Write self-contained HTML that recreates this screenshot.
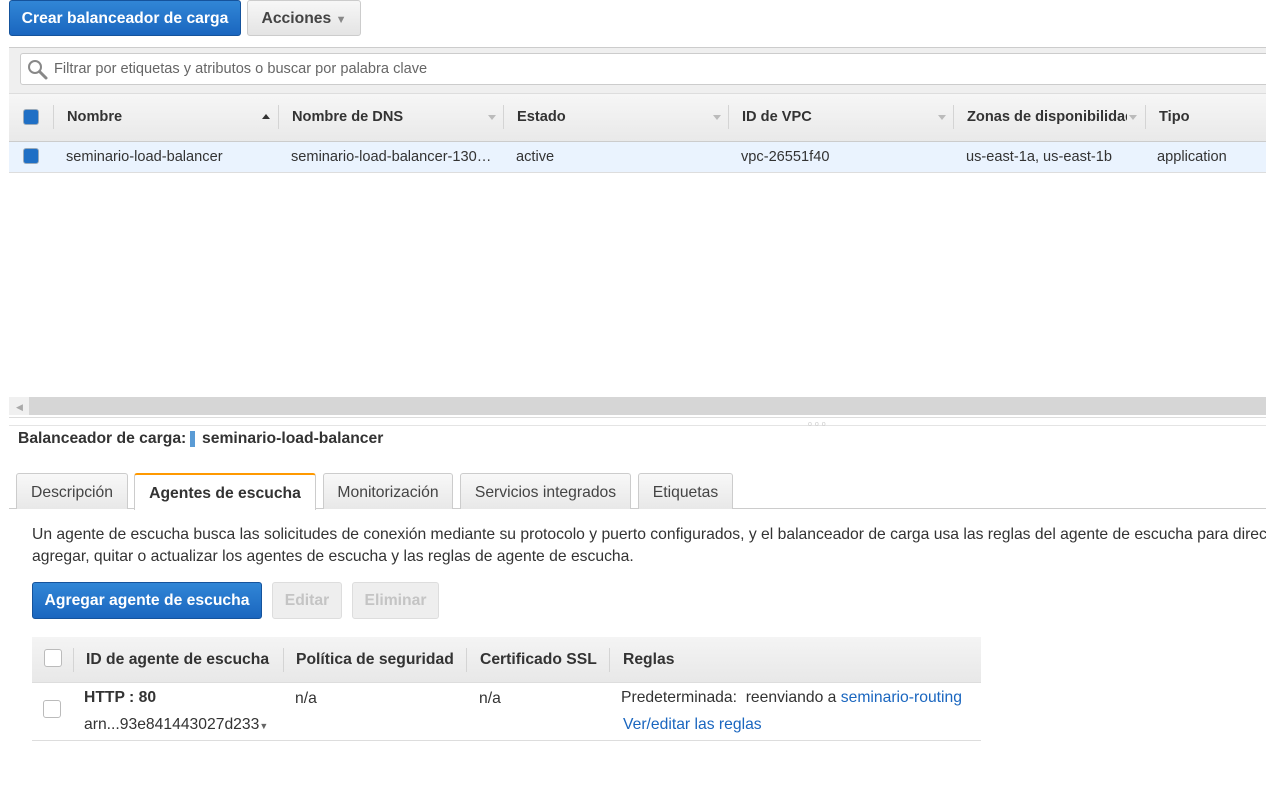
<!DOCTYPE html>
<html><head><meta charset="utf-8"><style>
*{box-sizing:border-box;margin:0;padding:0}
body{width:1266px;height:796px;overflow:hidden;background:#fff;font-family:"Liberation Sans",Arial,sans-serif;font-size:15.7px;color:#333;position:relative}
.a{position:absolute;white-space:nowrap}
.s{font-size:14.6px}
.btnp{background:linear-gradient(#3186d6,#1a66bf);border:1px solid #15539c;border-radius:3px;color:#fff;font-weight:bold;text-align:center}
.btng{background:linear-gradient(#f7f7f7,#e4e4e4);border:1px solid #ccc;border-radius:3px;color:#444;font-weight:bold;text-align:center}
.btnd{background:#eee;border:1px solid #ddd;border-radius:3px;color:#c4c4c4;font-weight:bold;text-align:center}
.cb{position:absolute;width:16px;height:16px;border-radius:3px;background:#1f6fc5;border:1px solid #9ab}
.cbw{position:absolute;width:18px;height:18px;border-radius:3px;background:#fff;border:1px solid #bbb}
.hd{font-weight:bold;color:#333}
.sep{position:absolute;width:1px;background:#d4d4d4}
.tri{position:absolute;width:0;height:0;border-left:4px solid transparent;border-right:4px solid transparent}
.tab{position:absolute;top:473px;height:36px;border:1px solid #ccc;border-bottom:none;border-radius:3px 3px 0 0;background:linear-gradient(#f8f8f8,#e8e8e8);text-align:center;line-height:38px;color:#444}
a{color:#1a66bf;text-decoration:none}
</style></head><body>
<div class="a btnp" style="left:9px;top:0;width:232px;height:36px;line-height:35px">Crear balanceador de carga</div>
<div class="a btng" style="left:247px;top:0;width:114px;height:36px;line-height:35px">Acciones <span style="color:#888;font-size:11px">&#9660;</span></div>

<div class="a" style="left:9px;top:47px;width:1257px;height:46px;background:#efefef;border-top:1px solid #ccc"></div>
<div class="a" style="left:20px;top:53px;width:1250px;height:32px;background:#fff;border:1px solid #ccc;border-radius:3px"></div>
<svg class="a" style="left:27px;top:59px" width="22" height="22" viewBox="0 0 22 22"><circle cx="8" cy="8" r="6" fill="none" stroke="#888" stroke-width="2"/><line x1="12.5" y1="12.5" x2="19" y2="19" stroke="#888" stroke-width="3" stroke-linecap="round"/></svg>
<div class="a s" style="left:54px;top:61px;color:#666">Filtrar por etiquetas y atributos o buscar por palabra clave</div>

<div class="a" style="left:9px;top:93px;width:1257px;height:49px;background:linear-gradient(#f6f6f6,#e9e9e9);border-top:1px solid #ddd;border-bottom:1px solid #ccc"></div>
<div class="cb" style="left:23px;top:109px"></div>
<div class="sep" style="left:53px;top:105px;height:24px"></div>
<div class="a hd s" style="left:67px;top:109px">Nombre</div>
<div class="tri" style="left:262px;top:114px;border-bottom:5px solid #333"></div>
<div class="sep" style="left:278px;top:105px;height:24px"></div>
<div class="a hd s" style="left:292px;top:109px">Nombre de DNS</div>
<div class="tri" style="left:488px;top:115px;border-top:5px solid #bbb"></div>
<div class="sep" style="left:503px;top:105px;height:24px"></div>
<div class="a hd s" style="left:517px;top:109px">Estado</div>
<div class="tri" style="left:713px;top:115px;border-top:5px solid #bbb"></div>
<div class="sep" style="left:728px;top:105px;height:24px"></div>
<div class="a hd s" style="left:742px;top:109px">ID de VPC</div>
<div class="tri" style="left:938px;top:115px;border-top:5px solid #bbb"></div>
<div class="sep" style="left:953px;top:105px;height:24px"></div>
<div class="a hd s" style="left:967px;top:109px;width:160px;overflow:hidden">Zonas de disponibilidad</div>
<div class="tri" style="left:1129px;top:115px;border-top:5px solid #bbb"></div>
<div class="sep" style="left:1145px;top:105px;height:24px"></div>
<div class="a hd s" style="left:1159px;top:109px">Tipo</div>

<div class="a" style="left:9px;top:142px;width:1257px;height:31px;background:#eaf3fe;border-bottom:1px solid #ddd"></div>
<div class="cb" style="left:23px;top:148px"></div>
<div class="a s" style="left:66px;top:149px">seminario-load-balancer</div>
<div class="a s" style="left:291px;top:149px">seminario-load-balancer-130…</div>
<div class="a s" style="left:516px;top:149px">active</div>
<div class="a s" style="left:741px;top:149px">vpc-26551f40</div>
<div class="a s" style="left:966px;top:149px">us-east-1a, us-east-1b</div>
<div class="a s" style="left:1157px;top:149px">application</div>

<div class="a" style="left:9px;top:397px;width:1257px;height:18px;background:#d6d6d6;border-left:20px solid #f0f0f0"></div>
<div class="a" style="left:16px;top:402px;color:#aaa;font-size:9px">&#9664;</div>
<div class="a" style="left:9px;top:417px;width:1257px;height:1px;background:#ddd"></div>
<div class="a" style="left:9px;top:425px;width:1257px;height:1px;background:#e4e4e4"></div>
<div class="a" style="left:808px;top:421px;color:#ccc;font-size:7px;letter-spacing:3px">ooo</div>

<div class="a hd" style="left:18px;top:430px">Balanceador de carga:</div>
<div class="a" style="left:190px;top:431px;width:5px;height:16px;background:#5a9bd5"></div>
<div class="a hd" style="left:202px;top:430px">seminario-load-balancer</div>

<div class="a" style="left:9px;top:508px;width:1257px;height:1px;background:#ccc"></div>
<div class="tab" style="left:16px;width:112px">Descripción</div>
<div class="tab" style="left:134px;width:182px;background:#fff;border-top:2px solid #f90;font-weight:bold;color:#333;height:37px">Agentes de escucha</div>
<div class="tab" style="left:323px;width:130px">Monitorización</div>
<div class="tab" style="left:460px;width:171px">Servicios integrados</div>
<div class="tab" style="left:638px;width:95px">Etiquetas</div>

<div class="a" style="left:32px;top:526px">Un agente de escucha busca las solicitudes de conexión mediante su protocolo y puerto configurados, y el balanceador de carga usa las reglas del agente de escucha para dirección</div>
<div class="a" style="left:32px;top:548px">agregar, quitar o actualizar los agentes de escucha y las reglas de agente de escucha.</div>

<div class="a btnp" style="left:32px;top:582px;width:230px;height:37px;line-height:36px">Agregar agente de escucha</div>
<div class="a btnd" style="left:272px;top:582px;width:70px;height:37px;line-height:36px">Editar</div>
<div class="a btnd" style="left:352px;top:582px;width:87px;height:37px;line-height:36px">Eliminar</div>

<div class="a" style="left:32px;top:637px;width:949px;height:46px;background:linear-gradient(#f4f4f4,#e8e8e8);border-bottom:1px solid #ddd"></div>
<div class="cbw" style="left:44px;top:649px"></div>
<div class="sep" style="left:73px;top:648px;height:24px"></div>
<div class="a hd" style="left:86px;top:651px">ID de agente de escucha</div>
<div class="sep" style="left:283px;top:648px;height:24px"></div>
<div class="a hd" style="left:296px;top:651px">Política de seguridad</div>
<div class="sep" style="left:466px;top:648px;height:24px"></div>
<div class="a hd" style="left:480px;top:651px">Certificado SSL</div>
<div class="sep" style="left:609px;top:648px;height:24px"></div>
<div class="a hd" style="left:623px;top:651px">Reglas</div>

<div class="cbw" style="left:43px;top:700px"></div>
<div class="a hd" style="left:84px;top:689px">HTTP : 80</div>
<div class="a" style="left:84px;top:716px">arn...93e841443027d233<span style="font-size:9px;color:#666">&#9660;</span></div>
<div class="a" style="left:295px;top:690px">n/a</div>
<div class="a" style="left:479px;top:690px">n/a</div>
<div class="a" style="left:621px;top:689px">Predeterminada:&nbsp; reenviando a <a>seminario-routing</a></div>
<div class="a" style="left:623px;top:716px"><a>Ver/editar las reglas</a></div>
<div class="a" style="left:32px;top:740px;width:949px;height:1px;background:#ddd"></div>
</body></html>
